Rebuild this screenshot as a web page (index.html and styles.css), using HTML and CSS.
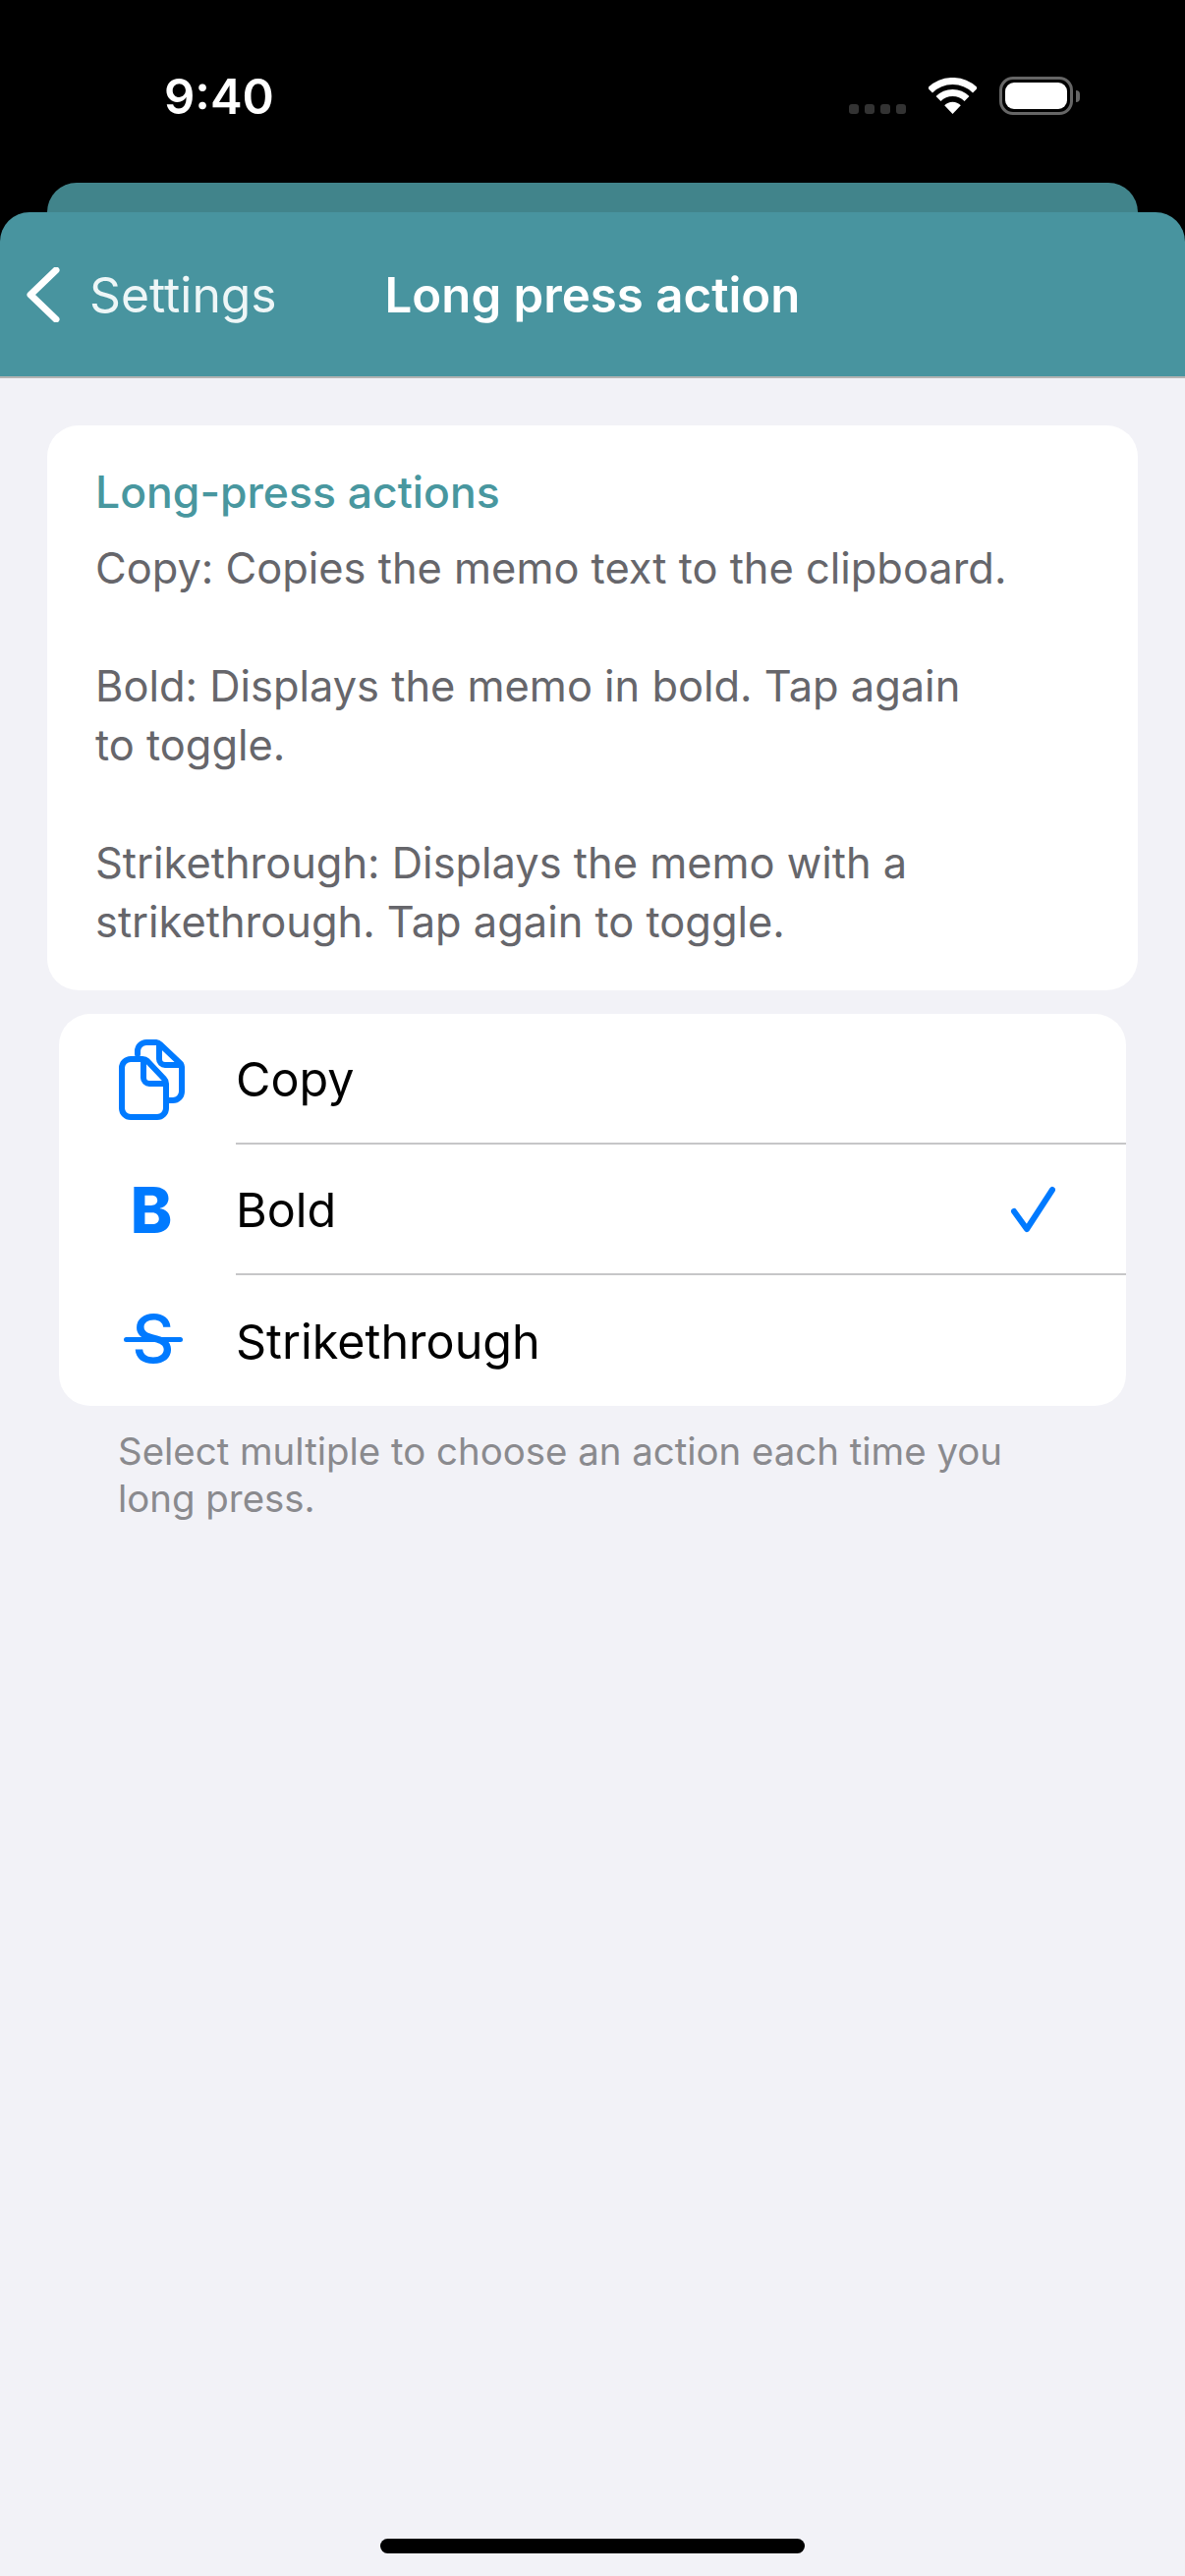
FILE: index.html
```html
<!DOCTYPE html>
<html>
<head>
    <title>Long press action</title>
    <link rel="stylesheet" href="styles.css">
</head>
<body>
    <div class="status-bar">
        <span class="time">9:40</span>
        <div class="status-icons">
            <div class="dots"><i></i><i></i><i></i><i></i></div>
            <svg class="wifi" width="49" height="37" viewBox="0 0 49 37">
                <path d="M1.5 13A32.5 32.5 0 0 1 47.5 13M10 21.5A20.5 20.5 0 0 1 39 21.5" fill="none" stroke="#fff" stroke-width="7"/>
                <path d="M24.5 37L16.2 28.2A11.5 11.5 0 0 1 32.8 28.2Z" fill="#fff"/>
            </svg>
            <div class="battery"><div class="battery-fill"></div></div>
            <div class="battery-nub"></div>
        </div>
    </div>

    <div class="sheet-behind"></div>
    <div class="nav">
        <div class="nav-back">
            <svg width="34" height="56" viewBox="0 0 34 56">
                <path d="M30 3L4 28L30 53" fill="none" stroke="#fff" stroke-width="7" stroke-linecap="round" stroke-linejoin="round"/>
            </svg>
            <span>Settings</span>
        </div>
        <div class="nav-title">Long press action</div>
        <div></div>
    </div>

    <div class="content">
        <div class="card">
            <h2>Long-press actions</h2>
            <p>Copy: Copies the memo text to the clipboard.</p>
            <p>Bold: Displays the memo in bold. Tap again<br>to toggle.</p>
            <p>Strikethrough: Displays the memo with a<br>strikethrough. Tap again to toggle.</p>
        </div>

        <div class="list">
            <div class="row">
                <div class="row-icon">
                    <svg width="67" height="82" viewBox="0 0 67 82">
                        <g fill="none" stroke="#007aff" stroke-width="6" stroke-linejoin="round" stroke-linecap="round">
                            <path d="M19 15V12a9 9 0 0 1 9-9H38a6 6 0 0 1 4 2L61 23a7 7 0 0 1 3 5V53a9 9 0 0 1-9 9H50"/>
                            <path d="M41 5V20a6 6 0 0 0 6 6H63"/>
                            <path d="M24 20H12a9 9 0 0 0-9 9V70a9 9 0 0 0 9 9H39a9 9 0 0 0 9-9V45a7 7 0 0 0-2-5L29 22a7 7 0 0 0-5-2Z"/>
                            <path d="M25 21V39a6 6 0 0 0 6 6H47"/>
                        </g>
                    </svg>
                </div>
                <div class="row-body"><span>Copy</span></div>
            </div>
            <div class="row">
                <div class="row-icon"><span class="glyph-bold">B</span></div>
                <div class="row-body">
                    <span>Bold</span>
                    <svg class="check" width="46" height="48" viewBox="0 0 46 48">
                        <path d="M4 26L17 44L43 4" fill="none" stroke="#007aff" stroke-width="6" stroke-linecap="round" stroke-linejoin="round"/>
                    </svg>
                </div>
            </div>
            <div class="row">
                <div class="row-icon"><span class="glyph-strike">S</span></div>
                <div class="row-body"><span>Strikethrough</span></div>
            </div>
        </div>

        <p class="note">Select multiple to choose an action each time you<br>long press.</p>

        <div class="home-bar"></div>
    </div>
</body>
</html>
```

FILE: styles.css
```css
html, body { margin: 0; padding: 0; }
body { width: 1206px; height: 2622px; display: flex; flex-direction: column; overflow: hidden; background: #000; font-family: Inter, "Noto Sans", sans-serif; }

.status-bar { height: 186px; display: flex; justify-content: space-between; padding: 74px 107px 0 167px; box-sizing: border-box; color: #fff; }
.time { font-size: 49px; font-weight: 600; line-height: 50px; }
.status-icons { display: flex; align-items: flex-start; margin-top: -2px; }
.dots { display: flex; gap: 6px; margin-top: 34px; margin-right: 23px; }
.dots i { width: 10px; height: 10px; border-radius: 3px; background: #333; }
.wifi { margin-top: 7px; margin-right: 23px; }
.battery { width: 75px; height: 39px; margin-top: 6px; padding: 3px; box-sizing: border-box; border: 3px solid #666; border-radius: 14px; }
.battery-fill { height: 100%; background: #fff; border-radius: 9px; }
.battery-nub { width: 4px; height: 12px; margin: 20px 0 0 3px; background: #666; border-radius: 0 4px 4px 0; }

.sheet-behind { height: 30px; margin: 0 48px; background: #41848b; border-radius: 30px 30px 0 0; }

.nav { height: 169px; flex-shrink: 0; display: grid; grid-template-columns: 1fr auto 1fr; align-items: center; box-sizing: border-box; background: #48949f; border-radius: 30px 30px 0 0; border-bottom: 2px solid #b3b3b3; color: #fff; }
.nav-back { display: flex; align-items: center; gap: 30px; padding-left: 27px; font-size: 49.8px; color: #eef6f7; }
.nav-title { font-size: 49.2px; font-weight: 600; }

.content { flex: 1; display: flex; flex-direction: column; background: #f2f2f7; padding: 48px 48px 0; }

.card { background: #fff; border-radius: 32px; padding: 42px 49px 22px; height: 575px; box-sizing: border-box; }
.card h2 { margin: 0 0 21px; font-size: 44.5px; font-weight: 500; line-height: 52px; color: #48979f; }
.card p { margin: 0 0 60px; font-size: 43.4px; line-height: 60px; color: #66666b; }
.card p:last-child { margin-bottom: 0; }

.list { margin: 24px 12px 0; background: #fff; border-radius: 32px; }
.row { height: 133px; display: flex; }
.row-icon { width: 180px; display: flex; justify-content: center; align-items: center; font-size: 0; flex-shrink: 0; color: #007aff; box-sizing: border-box; padding-left: 8px; }
.row-body { flex: 1; display: flex; align-items: center; justify-content: space-between; padding-top: 1px; font-size: 48.5px; color: #000; border-bottom: 2px solid #c6c6c8; box-sizing: border-box; }
.row:last-child .row-body { border-bottom: 0; }
.check { margin-right: 72px; }

.glyph-bold { font-size: 64px; font-weight: 800; line-height: 64px; }
.glyph-strike { position: relative; margin-left: 4px; margin-top: -4px; font-size: 67px; font-weight: 500; line-height: 64px; }
.glyph-strike::after { content: ""; position: absolute; left: -8px; right: -8px; top: 30px; height: 5px; border-radius: 3px; background: #007aff; }

.note { margin: 22px 60px 0 72px; font-size: 38.4px; line-height: 48px; color: #8a8a8e; }

.home-bar { width: 432px; height: 15px; margin: auto auto 23px; border-radius: 8px; background: #000; }
```
